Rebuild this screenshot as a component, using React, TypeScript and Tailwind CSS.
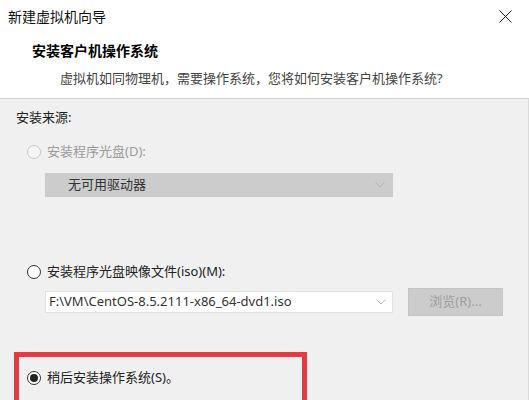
import React from 'react';

const cjk = '[font-family:"Noto_Sans","Noto_Sans_CJK_SC",sans-serif]';

function Radio({ checked = false, disabled = false }: { checked?: boolean; disabled?: boolean }) {
  return (
    <span
      className={`flex h-[14px] w-[14px] shrink-0 items-center justify-center rounded-full border ${
        disabled ? 'border-[#c8c8c8] bg-[#f4f4f4]' : 'border-[#333333] bg-white'
      }`}
    >
      {checked && <span className="h-[8px] w-[8px] rounded-full bg-[#222222]" />}
    </span>
  );
}

function Chevron({ color }: { color: string }) {
  return (
    <svg width="10" height="6" viewBox="0 0 10 6" fill="none">
      <path d="M0.5 0.5 L5 5 L9.5 0.5" stroke={color} strokeWidth="1" />
    </svg>
  );
}

export default function App() {
  return (
    <div className={`flex h-[400px] w-[529px] flex-col overflow-hidden bg-[#f0f0f0] ${cjk}`}>
      {/* header */}
      <div className="h-[99px] shrink-0 border-b border-[#d4d4d4] bg-white">
        <div className="flex h-[32px] items-center justify-between pl-[8px] pr-[17px]">
          <span className="text-[14px] text-[#111111]">新建虚拟机向导</span>
          <svg width="13" height="13" viewBox="0 0 13 13" fill="none">
            <path d="M0.5 0.5 L12.5 12.5 M12.5 0.5 L0.5 12.5" stroke="#222" strokeWidth="1" />
          </svg>
        </div>
        <div className="mt-[9px] pl-[32px] text-[14px] font-bold leading-[20px] text-black">安装客户机操作系统</div>
        <div className="mt-[7px] pl-[60px] text-[13px] leading-[20px] text-[#444444]">
          虚拟机如同物理机，需要操作系统，您将如何安装客户机操作系统?
        </div>
      </div>

      {/* body */}
      <div className="relative flex-1 border-r border-[#dadada]">
        <div className="mt-[8px] pl-[16px] text-[13px] leading-[20px] text-[#222222]">安装来源:</div>

        <div className="mt-[15px] flex h-[20px] items-center gap-[6px] pl-[27px] text-[13px] text-[#9a9a9a]">
          <Radio disabled />
          <span>安装程序光盘(D):</span>
        </div>
        <div className="ml-[45px] mt-[11px] flex h-[24px] w-[348px] items-center justify-between bg-[#cccccc] pl-[23px] pr-[8px] text-[13px] text-[#333333]">
          <span>无可用驱动器</span>
          <Chevron color="#b4b4b4" />
        </div>

        <div className="mt-[65px] flex h-[20px] items-center gap-[6px] pl-[27px] text-[13px] text-[#222222]">
          <Radio />
          <span>安装程序光盘映像文件(iso)(M):</span>
        </div>
        <div className="mt-[6px] flex items-center pl-[45px]">
          <div className="flex h-[22px] w-[348px] items-center justify-between border border-[#e2e2e2] bg-white pl-[3px] pr-[6px] text-[13px] text-[#333333]">
            <span>F:\VM\CentOS-8.5.2111-x86_64-dvd1.iso</span>
            <Chevron color="#b8b8b8" />
          </div>
          <div className="ml-[15px] flex h-[28px] w-[95px] items-center justify-center border border-[#c4c4c4] bg-[#cccccc] text-[13px] text-[#9e9e9e]">
            浏览(R)...
          </div>
        </div>

        <div className="ml-[14px] mt-[36px] h-[80px] w-[293px] border-[5px] border-[#e53a3f] pl-[8px] pt-[11px]">
          <div className="flex h-[20px] items-center gap-[6px] text-[13px] text-[#222222]">
            <Radio checked />
            <span>稍后安装操作系统(S)。</span>
          </div>
        </div>
      </div>
    </div>
  );
}
